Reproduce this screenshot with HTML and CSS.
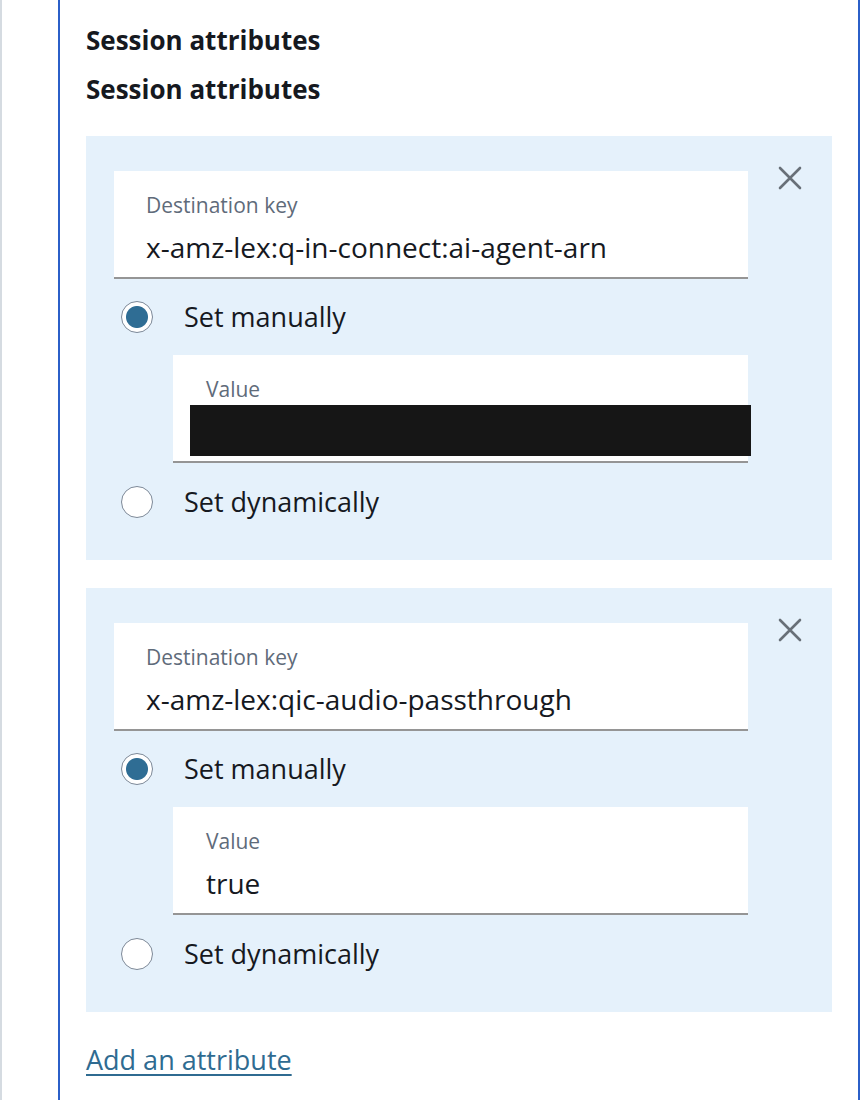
FILE: index.html
```html
<!DOCTYPE html>
<html>
<head>
  <title>Session attributes</title>
  <link rel="stylesheet" href="styles.css">
</head>
<body>

  <div class="frame">
    <div class="section">
      <h3>Session attributes</h3>
      <h3>Session attributes</h3>

      <div class="attr-panel">
        <div class="attr-body">
          <div class="field">
            <div class="field-label">Destination key</div>
            <div class="field-value">x-amz-lex:q-in-connect:ai-agent-arn</div>
          </div>

          <label class="radio-row">
            <input type="radio" name="mode1" checked />
            <span>Set manually</span>
          </label>

          <div class="field field-nested">
            <div class="field-label">Value</div>
            <div class="field-value redacted"></div>
          </div>

          <label class="radio-row">
            <input type="radio" name="mode1" />
            <span>Set dynamically</span>
          </label>
        </div>

        <div class="remove-cell">
          <button class="remove-btn" type="button" aria-label="Remove">
            <svg width="24" height="24" viewBox="0 0 24 24">
              <path d="M2 2 L22 22 M22 2 L2 22" />
            </svg>
          </button>
        </div>
      </div>

      <div class="attr-panel">
        <div class="attr-body">
          <div class="field">
            <div class="field-label">Destination key</div>
            <div class="field-value">x-amz-lex:qic-audio-passthrough</div>
          </div>

          <label class="radio-row">
            <input type="radio" name="mode2" checked />
            <span>Set manually</span>
          </label>

          <div class="field field-nested">
            <div class="field-label">Value</div>
            <div class="field-value">true</div>
          </div>

          <label class="radio-row">
            <input type="radio" name="mode2" />
            <span>Set dynamically</span>
          </label>
        </div>

        <div class="remove-cell">
          <button class="remove-btn" type="button" aria-label="Remove">
            <svg width="24" height="24" viewBox="0 0 24 24">
              <path d="M2 2 L22 22 M22 2 L2 22" />
            </svg>
          </button>
        </div>
      </div>

      <a class="add-link" href="#">Add an attribute</a>
    </div>
  </div>

</body>
</html>
```

FILE: styles.css
```css
body {
  margin: 0;
  font-family: "Open Sans", "Noto Sans", Arial, sans-serif;
  color: #16191f;
  background: #ffffff;
}

.frame {
  border-left: 2px solid #d5dbe1;
  padding-left: 56px;
  min-height: 1100px;
  box-sizing: border-box;
}

.section {
  border-left: 2px solid #2b5fc8;
  border-right: 2px solid #2b5fc8;
  padding: 16px 26px 40px 26px;
  min-height: 1100px;
  box-sizing: border-box;
}

h3 {
  margin: 0;
  font-size: 26px;
  font-weight: bold;
  line-height: 49px;
}

h3 + h3 {
  margin-bottom: 22px;
}

/* one attribute block */
.attr-panel {
  display: flex;
  background: #e5f1fb;
  padding: 35px 0 42px 28px;
  margin-bottom: 28px;
}

.attr-body {
  width: 634px;
}

.field {
  background: #ffffff;
  border-bottom: 2px solid #959595;
  padding: 20px 0 12px 32px;
}

.field-nested {
  margin-left: 59px;
  padding-left: 33px;
  margin-top: 22px;
}

.field-label {
  font-size: 21px;
  line-height: 28px;
  color: #5f6b7a;
}

.field-value {
  margin-top: 10px;
  font-size: 28px;
  line-height: 36px;
}

/* hidden value, blacked out */
.field-value.redacted {
  background: #161616;
  height: 51px;
  margin: 2px -3px -7px -16px;
}

.radio-row {
  display: flex;
  align-items: center;
  margin-top: 22px;
  padding-left: 7px;
  font-size: 27px;
  line-height: 32px;
}

.field-nested + .radio-row {
  margin-top: 23px;
}

.radio-row input {
  appearance: none;
  width: 32px;
  height: 32px;
  margin: 0 31px 0 0;
  border: 1.5px solid #7d8998;
  border-radius: 50%;
  background: #ffffff;
  box-sizing: border-box;
}

.radio-row input:checked {
  background: radial-gradient(circle, #2f6d94 0, #2f6d94 10.5px, #ffffff 11.5px);
}

.remove-cell {
  flex: 1;
  display: flex;
  justify-content: center;
  margin-top: -5px;
}

.remove-btn {
  background: none;
  border: none;
  padding: 0;
  width: 24px;
  height: 24px;
  cursor: pointer;
}

.remove-btn path {
  stroke: #687078;
  stroke-width: 2.6;
  stroke-linecap: round;
  fill: none;
}

.add-link {
  display: inline-block;
  margin-top: 2px;
  font-size: 27px;
  line-height: 36px;
  color: #2f6b91;
  text-decoration: underline;
  text-decoration-thickness: 2px;
  text-underline-offset: 4px;
}
```
